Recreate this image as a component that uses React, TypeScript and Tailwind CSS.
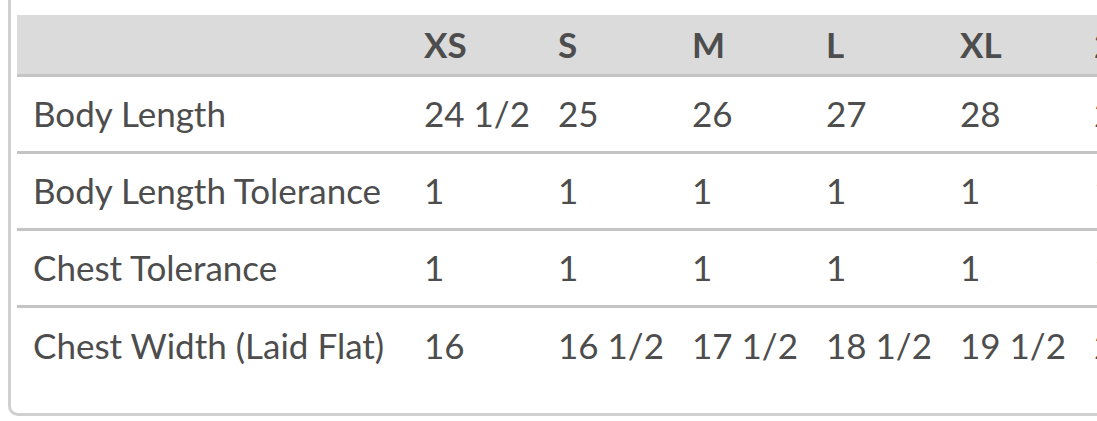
import React from "react";

const sizes = ["XS", "S", "M", "L", "XL", "2XL"];

const rows = [
  { label: "Body Length", values: ["24 1/2", "25", "26", "27", "28", "29"] },
  { label: "Body Length Tolerance", values: ["1", "1", "1", "1", "1", "1"] },
  { label: "Chest Tolerance", values: ["1", "1", "1", "1", "1", "1"] },
  { label: "Chest Width (Laid Flat)", values: ["16", "16 1/2", "17 1/2", "18 1/2", "19 1/2", "20 1/2"] },
];

export default function App() {
  return (
    <div
      className="w-[1097px] h-[421px] overflow-hidden bg-white"
      style={{ fontFamily: "Lato, 'Open Sans', sans-serif" }}
    >
      <div className="ml-2 w-[1300px] border-l-[3px] border-b-[3px] border-[#d0d0d0] rounded-bl-[10px] pl-[6px] pt-[15px] pb-[30px]">
        {/* Size chart */}
        <table className="table-fixed w-[1195px] border-collapse text-[#4d4d4d] text-[35px] whitespace-nowrap">
          <thead>
            <tr className="bg-[#dbdbdb] border-b-[3px] border-[#c4c4c4]">
              <th className="w-[391px] h-[60px] px-4" />
              {sizes.map((size) => (
                <th key={size} className="w-[134px] h-[60px] px-4 text-left font-bold">
                  {size}
                </th>
              ))}
            </tr>
          </thead>
          <tbody>
            {rows.map((row, index) => (
              <tr
                key={row.label}
                className={index < rows.length - 1 ? "border-b-[3px] border-[#c4c4c4]" : ""}
              >
                <td className="h-[77px] px-4 text-left">{row.label}</td>
                {row.values.map((value, i) => (
                  <td key={i} className="h-[77px] px-4 text-left">
                    {value}
                  </td>
                ))}
              </tr>
            ))}
          </tbody>
        </table>
      </div>
    </div>
  );
}
